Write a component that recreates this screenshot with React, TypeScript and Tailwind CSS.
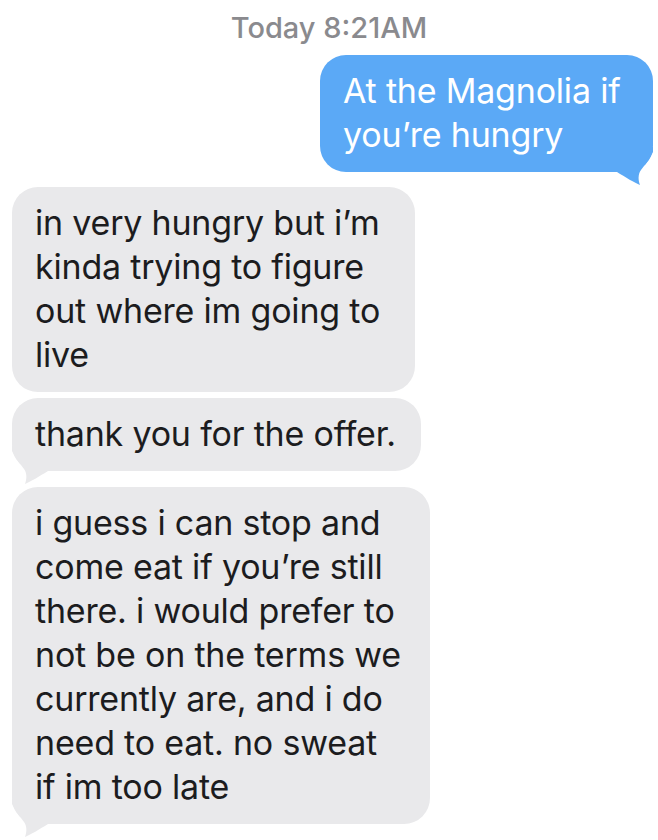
const font = { fontFamily: "Inter, 'Noto Sans', sans-serif" };

type Msg = {
  lines: string[];
  width: string;
  tail?: boolean;
  gap: string;
};

const received: Msg[] = [
  {
    lines: ["in very hungry but i’m", "kinda trying to figure", "out where im going to", "live"],
    width: "w-[403px]",
    gap: "mt-[15px]",
  },
  {
    lines: ["thank you for the offer."],
    width: "w-[409px]",
    tail: true,
    gap: "mt-[6px]",
  },
  {
    lines: [
      "i guess i can stop and",
      "come eat if you’re still",
      "there. i would prefer to",
      "not be on the terms we",
      "currently are, and i do",
      "need to eat. no sweat",
      "if im too late",
    ],
    width: "w-[418px]",
    tail: true,
    gap: "mt-[16px]",
  },
];

const Tail = ({ color, side }: { color: string; side: "left" | "right" }) => (
  <svg
    viewBox="0 0 43 40"
    className={
      side === "right"
        ? "absolute right-0 -bottom-[15px] w-[43px] h-[40px]"
        : "absolute left-0 -bottom-[15px] w-[43px] h-[40px] -scale-x-100"
    }
  >
    <path
      d="M0 0 L0 25 L7 25 C15 30 25 36 30 38 C28 33 28 27 31 23 C35 17 40 12 43 5 L43 0 Z"
      fill={color}
    />
  </svg>
);

export default function App() {
  return (
    <div className="w-[658px] h-[840px] bg-white overflow-hidden flex flex-col" style={font}>
      {/* Timestamp */}
      <div className="pt-[10px] text-center text-[29px] leading-[35px] font-medium text-[#8a8a8e]">
        Today 8:21AM
      </div>

      {/* Sent */}
      <div className="mt-[10px] flex justify-end pr-[5px]">
        <div className="relative w-[333px] rounded-[26px] bg-[#5ba9f6] pl-[23px] pt-[14px] pb-[15px] text-white text-[34px] leading-[44px] tracking-[-0.2px]">
          <div className="relative z-10 whitespace-nowrap">At the Magnolia if</div>
          <div className="relative z-10 whitespace-nowrap">you’re hungry</div>
          <Tail color="#5ba9f6" side="right" />
        </div>
      </div>

      {/* Received */}
      {received.map((m, i) => (
        <div key={i} className={`${m.gap} flex pl-[12px]`}>
          <div
            className={`relative ${m.width} rounded-[26px] bg-[#e9e9eb] pl-[23px] pt-[14px] pb-[15px] text-[#1c1c1e] text-[34px] leading-[44px] tracking-[-0.2px]`}
          >
            {m.lines.map((l) => (
              <div key={l} className="relative z-10 whitespace-nowrap">
                {l}
              </div>
            ))}
            {m.tail && <Tail color="#e9e9eb" side="left" />}
          </div>
        </div>
      ))}
    </div>
  );
}
